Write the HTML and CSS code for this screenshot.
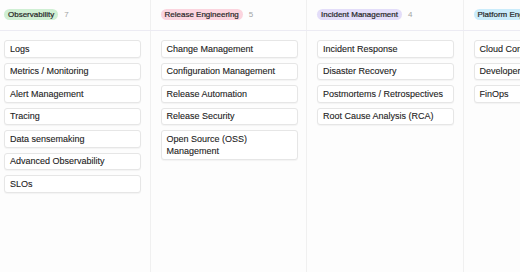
FILE: index.html
```html
<!DOCTYPE html>
<html lang="en">
<head>
  <meta charset="UTF-8">
  <meta name="viewport" content="width=device-width, initial-scale=1.0">
  <title>Board</title>
  <link rel="stylesheet" href="styles.css">
</head>
<body>
  <main class="board">
    <section class="column">
      <header class="column-head">
        <span class="tag tag-green">Observability</span>
        <span class="count">7</span>
      </header>
      <div class="cards">
        <div class="card">Logs</div>
        <div class="card">Metrics / Monitoring</div>
        <div class="card">Alert Management</div>
        <div class="card">Tracing</div>
        <div class="card">Data sensemaking</div>
        <div class="card">Advanced Observability</div>
        <div class="card">SLOs</div>
      </div>
    </section>

    <section class="column">
      <header class="column-head">
        <span class="tag tag-pink">Release Engineering</span>
        <span class="count">5</span>
      </header>
      <div class="cards">
        <div class="card">Change Management</div>
        <div class="card">Configuration Management</div>
        <div class="card">Release Automation</div>
        <div class="card">Release Security</div>
        <div class="card">Open Source (OSS) Management</div>
      </div>
    </section>

    <section class="column">
      <header class="column-head">
        <span class="tag tag-purple">Incident Management</span>
        <span class="count">4</span>
      </header>
      <div class="cards">
        <div class="card">Incident Response</div>
        <div class="card">Disaster Recovery</div>
        <div class="card">Postmortems / Retrospectives</div>
        <div class="card">Root Cause Analysis (RCA)</div>
      </div>
    </section>

    <section class="column">
      <header class="column-head">
        <span class="tag tag-blue">Platform Engineering</span>
        <span class="count">3</span>
      </header>
      <div class="cards">
        <div class="card">Cloud Computing</div>
        <div class="card">Developer Experience</div>
        <div class="card">FinOps</div>
      </div>
    </section>
  </main>
</body>
</html>
```

FILE: styles.css
```css
* {
  margin: 0;
  padding: 0;
  box-sizing: border-box;
}

body {
  background-color: #fdfdfd;
  color: #37352f;
  font-family: "Liberation Sans", Arial, sans-serif;
  overflow: hidden;
  height: 272px;
}

.board {
  display: flex;
  height: 272px;
  margin-left: -6px;
}

.column {
  flex: 0 0 155.5px;
  display: flex;
  flex-direction: column;
  border-right: 1px solid #f0f0f0;
}

.column-head {
  display: flex;
  align-items: center;
  gap: 6px;
  height: 31px;
  padding: 0 0 1px 10px;
  border-bottom: 1px solid #ecebf3;
  margin-right: -1px;
}

.tag {
  display: inline-block;
  font-size: 8px;
  line-height: 11px;
  padding: 0 4px;
  border-radius: 6px;
  color: #262626;
  -webkit-text-stroke: 0.2px #262626;
  white-space: nowrap;
}

.tag-green {
  background-color: #cfefd3;
}

.tag-pink {
  background-color: #fbd4de;
}

.tag-purple {
  background-color: #e3ddf9;
}

.tag-blue {
  background-color: #caecfb;
}

.count {
  font-size: 8px;
  color: #a3a3a3;
}

.cards {
  display: flex;
  flex-direction: column;
  gap: 5px;
  padding: 9px 8.5px 0 10px;
}

.card {
  width: 137px;
  padding: 1.75px 5px;
  font-size: 9px;
  line-height: 12px;
  background-color: #fff;
  border: 1px solid #e6e6e6;
  border-radius: 3px;
  box-shadow: 0 1px 1px rgba(0, 0, 0, 0.04);
  color: #222;
  -webkit-text-stroke: 0.1px #222;
}
```
